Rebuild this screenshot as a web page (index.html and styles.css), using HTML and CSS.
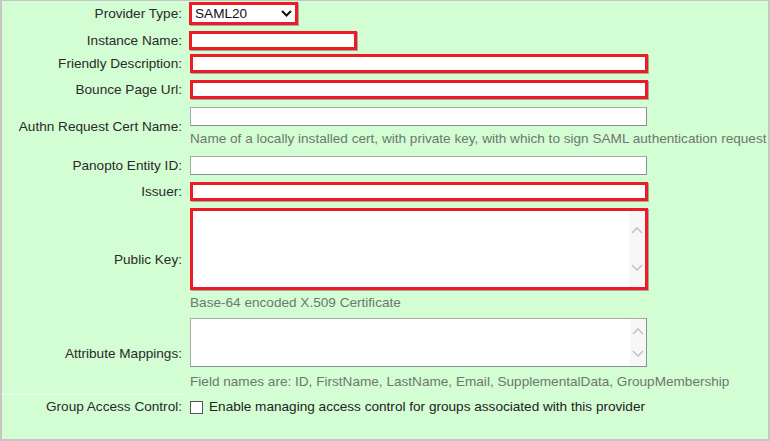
FILE: index.html
```html
<!DOCTYPE html>
<html lang="en">
<head>
<meta charset="utf-8">
<title>Provider settings</title>
<link rel="stylesheet" href="styles.css">
</head>
<body>
<div class="panel">
  <div class="row row-first">
    <div class="label">Provider Type:</div>
    <div class="field">
      <div class="select hl">
        <span>SAML20</span>
        <svg class="chev" width="11" height="7" viewBox="0 0 11 7"><path d="M1 1 L5.5 5.5 L10 1" fill="none" stroke="#111" stroke-width="2"/></svg>
      </div>
    </div>
  </div>
  <div class="row row-snug">
    <div class="label">Instance Name:</div>
    <div class="field"><input class="text hl short" type="text"></div>
  </div>
  <div class="row">
    <div class="label">Friendly Description:</div>
    <div class="field"><input class="text hl" type="text"></div>
  </div>
  <div class="row">
    <div class="label">Bounce Page Url:</div>
    <div class="field"><input class="text hl" type="text"></div>
  </div>
  <div class="row row-loose">
    <div class="label">Authn Request Cert Name:</div>
    <div class="field">
      <input class="text" type="text">
      <div class="help">Name of a locally installed cert, with private key, with which to sign SAML authentication request</div>
    </div>
  </div>
  <div class="row">
    <div class="label">Panopto Entity ID:</div>
    <div class="field"><input class="text" type="text"></div>
  </div>
  <div class="row">
    <div class="label">Issuer:</div>
    <div class="field"><input class="text hl" type="text"></div>
  </div>
  <div class="row">
    <div class="label">Public Key:</div>
    <div class="field">
      <div class="area hl area-tall">
        <div class="area-body"></div>
        <div class="scroll">
          <svg width="12" height="8" viewBox="0 0 12 8"><path d="M1 7 L6 2 L11 7" fill="none" stroke="#c4c4c4" stroke-width="1.6"/></svg>
          <svg width="12" height="8" viewBox="0 0 12 8"><path d="M1 1 L6 6 L11 1" fill="none" stroke="#c4c4c4" stroke-width="1.6"/></svg>
        </div>
      </div>
      <div class="help">Base-64 encoded X.509 Certificate</div>
    </div>
  </div>
  <div class="row">
    <div class="label">Attribute Mappings:</div>
    <div class="field">
      <div class="area plain area-short">
        <div class="area-body"></div>
        <div class="scroll">
          <svg width="12" height="8" viewBox="0 0 12 8"><path d="M1 7 L6 2 L11 7" fill="none" stroke="#c4c4c4" stroke-width="1.6"/></svg>
          <svg width="12" height="8" viewBox="0 0 12 8"><path d="M1 1 L6 6 L11 1" fill="none" stroke="#c4c4c4" stroke-width="1.6"/></svg>
        </div>
      </div>
      <div class="help help-low">Field names are: ID, FirstName, LastName, Email, SupplementalData, GroupMembership</div>
    </div>
  </div>
  <div class="divider"></div>
  <div class="row row-last">
    <div class="label">Group Access Control:</div>
    <div class="field check-line">
      <input class="checkbox" type="checkbox">
      <span>Enable managing access control for groups associated with this provider</span>
    </div>
  </div>
</div>
</body>
</html>
```

FILE: styles.css
```css
* {
  box-sizing: border-box;
}

html, body {
  margin: 0;
  padding: 0;
}

body {
  font-family: "Liberation Sans", Arial, sans-serif;
  font-size: 13.6px;
  line-height: 16px;
  color: #333;
  background: #d3fdd3;
}

.panel {
  width: 770px;
  height: 441px;
  overflow: hidden;
  background: #d3fdd3;
  border: 2px solid #c6c6c6;
  border-top-width: 1px;
}

.row {
  display: grid;
  grid-template-columns: 184px 1fr;
  align-items: center;
  padding: 3px 0 4px;
}

.row-first {
  padding: 1px 0 3px;
}

.row-snug {
  padding-bottom: 1px;
}

.row-loose {
  padding: 4px 0 6px;
}

.row-last {
  padding: 4px 0;
}

.label {
  text-align: right;
  padding-right: 4px;
  color: #2a2a2a;
  white-space: nowrap;
}

.field {
  padding-left: 4px;
  min-width: 0;
  white-space: nowrap;
}

.text {
  display: block;
  width: 457px;
  height: 19px;
  margin: 0;
  padding: 0;
  background: #fff;
  border: 1px solid #a9a9a9;
  border-right-color: #8e8e8e;
  border-bottom-color: #8e8e8e;
  font: inherit;
  outline: none;
  appearance: none;
}

.hl {
  border: 3px solid #ed1c24;
  box-shadow: 1px 1px 0 #a6a6a6;
}

.text.hl {
  width: 458px;
}

.text.short {
  width: 168px;
  margin-left: -1px;
}

.select {
  display: flex;
  align-items: center;
  justify-content: space-between;
  width: 109px;
  height: 23px;
  margin-left: -1px;
  padding: 0 3px 0 3px;
  background: #fff;
  color: #111;
}

.chev {
  display: block;
}

.help {
  margin-top: 5px;
  color: #6f776f;
}

.help-low {
  margin-top: 7px;
}

.area {
  display: flex;
  width: 458px;
  background: #fff;
}

.area.plain {
  width: 457px;
  border: 1px solid #a9a9a9;
  border-right-color: #8e8e8e;
  border-bottom-color: #8e8e8e;
}

.area-tall {
  height: 82px;
}

.area-short {
  height: 49px;
}

.area-body {
  flex: 1;
}

.scroll {
  width: 16px;
  background: #f7f7f7;
  display: flex;
  flex-direction: column;
  align-items: center;
  justify-content: space-around;
}

.scroll svg {
  display: block;
}

.divider {
  width: 184px;
  height: 1px;
  background: #eefcee;
}

.check-line {
  display: flex;
  align-items: center;
  gap: 6px;
  color: #222;
}

.checkbox {
  appearance: none;
  width: 13px;
  height: 13px;
  margin: 0;
  background: #fff;
  border: 1px solid #555;
  flex: none;
}
```
